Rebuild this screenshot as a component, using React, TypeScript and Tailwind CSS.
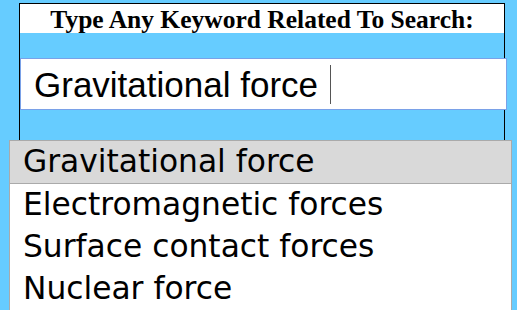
import { useState } from 'react';

const suggestions = ['Gravitational force', 'Electromagnetic forces', 'Surface contact forces', 'Nuclear force'];

export default function App() {
  const [query] = useState('Gravitational force ');
  const [active] = useState(0);

  return (
    <div className="relative h-[310px] w-full overflow-hidden bg-[#66ccff]">
      <div className="ml-[19px] mt-[3px] h-[400px] w-[486px] border border-black">
        <div className="flex h-[29px] items-center justify-center bg-white">
          <h1 className="pt-[2px] text-[25.5px] font-bold leading-none text-black [font-family:'Liberation_Serif',serif]">
            Type Any Keyword Related To Search:
          </h1>
        </div>
        <div className="mt-[25px] flex h-[52px] w-[487px] items-center border border-[#7aa1e8] bg-white pl-[13px] text-[35px] text-black [font-family:'Liberation_Sans',Arial,sans-serif]">
          <span className="whitespace-pre leading-none">{query}</span>
          <span className="ml-[2px] h-[39px] w-px bg-[#555]" />
        </div>
      </div>

      <ul className="absolute left-[9px] top-[140px] w-[503px] border border-[#aaaaaa] bg-white text-[31.3px] text-black [font-family:'DejaVu_Sans',Verdana,sans-serif]">
        {suggestions.map((s, i) => (
          <li
            key={s}
            className={
              i === active
                ? 'flex h-[43px] items-center border-b border-[#aaaaaa] bg-[#d9d9d9] pl-[13px] leading-none'
                : 'flex h-[42px] items-center pl-[13px] leading-none'
            }
          >
            {s}
          </li>
        ))}
      </ul>
    </div>
  );
}
